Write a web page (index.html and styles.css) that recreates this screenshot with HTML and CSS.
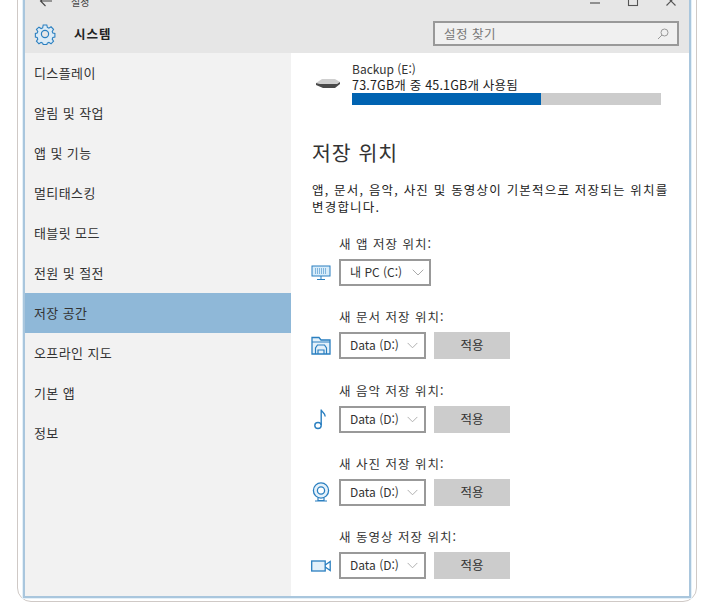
FILE: index.html
```html
<!DOCTYPE html>
<html lang="ko">
<head>
<meta charset="utf-8">
<title>설정</title>
<link rel="stylesheet" href="styles.css">
</head>
<body>
<div class="card">
  <div class="window">
    <header class="titlebar">
      <div class="caption">
        <svg class="back" width="14" height="12" viewBox="0 0 14 12"><path d="M13 6H1.5M6.5 1 1.5 6l5 5" fill="none" stroke="#444" stroke-width="1.1"/></svg>
        <span class="caption-title">설정</span>
        <div class="winbtns">
          <svg width="12" height="12" viewBox="0 0 12 12"><path d="M1 8h10" stroke="#555" stroke-width="1.2"/></svg>
          <svg width="12" height="12" viewBox="0 0 12 12"><rect x="1.5" y="1.5" width="9" height="9" fill="none" stroke="#555" stroke-width="1.1"/></svg>
          <svg width="12" height="12" viewBox="0 0 12 12"><path d="m1.5 1.5 9 9m0-9-9 9" stroke="#555" stroke-width="1.1"/></svg>
        </div>
      </div>
      <div class="headrow">
        <svg class="gear" width="22" height="22" viewBox="0 0 22 22"><path d="M9 1.5h4l.6 2.8 1.7.7 2.4-1.5 2.8 2.8-1.5 2.4.7 1.7 2.3.6v3.9l-2.3.6-.7 1.7 1.5 2.4-2.8 2.8-2.4-1.5-1.7.7-.6 1.8H9l-.6-1.8-1.7-.7-2.4 1.5-2.8-2.8 1.5-2.4-.7-1.7-2-.6v-3.9l2-.6.7-1.7-1.5-2.4L4.3 4l2.4 1.5 1.7-.7z" transform="translate(1.1 .6) scale(.9)" fill="#dcebf6" stroke="#2a7fc0" stroke-width="1.2"/><circle cx="11" cy="11" r="3.6" fill="#e6e6e6" stroke="#2a7fc0" stroke-width="1.2"/></svg>
        <h1 class="page-title">시스템</h1>
        <div class="search">
          <span>설정 찾기</span>
          <svg width="12" height="12" viewBox="0 0 12 12"><circle cx="7.5" cy="4.5" r="3.5" fill="none" stroke="#999"/><path d="M5 7 1 11" stroke="#999"/></svg>
        </div>
      </div>
    </header>
    <div class="body">
      <nav class="sidebar">
        <a class="nav-item">디스플레이</a>
        <a class="nav-item">알림 및 작업</a>
        <a class="nav-item">앱 및 기능</a>
        <a class="nav-item">멀티태스킹</a>
        <a class="nav-item">태블릿 모드</a>
        <a class="nav-item">전원 및 절전</a>
        <a class="nav-item selected">저장 공간</a>
        <a class="nav-item">오프라인 지도</a>
        <a class="nav-item">기본 앱</a>
        <a class="nav-item">정보</a>
      </nav>
      <main class="content">
        <section class="drive">
          <svg class="drive-icon" width="24" height="12" viewBox="0 0 24 12"><path d="M0 5 6 1h13l5 3-3 2H4z" fill="#cfcfcf"/><path d="M0 5l4 1h17l3-2v2l-5 4H7L0 7z" fill="#4a4a4a"/></svg>
          <div class="drive-info">
            <div class="drive-name">Backup (E:)</div>
            <div class="drive-usage">73.7GB개 중 45.1GB개 사용됨</div>
            <div class="bar"><div class="bar-fill" style="width:61.3%"></div></div>
          </div>
        </section>
        <h2 class="section-title">저장 위치</h2>
        <p class="desc">앱, 문서, 음악, 사진 및 동영상이 기본적으로 저장되는 위치를<br>변경합니다.</p>
        <div class="loc first">
          <div class="loc-label">새 앱 저장 위치:</div>
          <div class="loc-row">
            <svg class="loc-icon" width="20" height="16" viewBox="0 0 20 16"><rect x="1" y="1" width="18" height="10" fill="#d7ecfa" stroke="#2a7fc0"/><path d="M4 4h12M4 6h12M4 8h12" stroke="#2a7fc0" stroke-dasharray="1 1"/><path d="M10 11v3M6 14.5h8" stroke="#2a7fc0"/></svg>
            <div class="select wide"><span>내 PC (C:)</span><svg class="chev" width="12" height="7" viewBox="0 0 12 7"><path d="m.7.7 5.3 5.3L11.3.7" fill="none" stroke="#aaa"/></svg></div>
          </div>
        </div>
        <div class="loc">
          <div class="loc-label">새 문서 저장 위치:</div>
          <div class="loc-row">
            <svg class="loc-icon" width="20" height="19" viewBox="0 0 20 19"><path d="M1 18V1.5h7l2 2.5h9v14z" fill="#e4f1fa" stroke="#2a7fc0" stroke-width="1.3"/><path d="M1 6h18" stroke="#2a7fc0"/><path d="M4.5 18v-6l2-3h7l2 3v6M7 18v-4h6v4" fill="none" stroke="#2a7fc0" stroke-width="1.2"/></svg>
            <div class="select"><span>Data (D:)</span><svg class="chev" width="11" height="7" viewBox="0 0 12 7"><path d="m.7.7 5.3 5.3L11.3.7" fill="none" stroke="#aaa"/></svg></div>
            <button class="apply">적용</button>
          </div>
        </div>
        <div class="loc">
          <div class="loc-label">새 음악 저장 위치:</div>
          <div class="loc-row">
            <svg class="loc-icon" width="20" height="22" viewBox="0 0 20 22"><ellipse cx="7" cy="17.5" rx="3.2" ry="3" fill="none" stroke="#2a7fc0" stroke-width="1.4"/><path d="M10.2 17V1.5c.4 3 4 3.5 4 7" fill="none" stroke="#2a7fc0" stroke-width="1.4"/></svg>
            <div class="select"><span>Data (D:)</span><svg class="chev" width="11" height="7" viewBox="0 0 12 7"><path d="m.7.7 5.3 5.3L11.3.7" fill="none" stroke="#aaa"/></svg></div>
            <button class="apply">적용</button>
          </div>
        </div>
        <div class="loc">
          <div class="loc-label">새 사진 저장 위치:</div>
          <div class="loc-row">
            <svg class="loc-icon" width="20" height="20" viewBox="0 0 20 20"><circle cx="10" cy="8.5" r="7.6" fill="#e4f1fa" stroke="#2a7fc0" stroke-width="1.3"/><circle cx="10" cy="8.5" r="3.6" fill="#fff" stroke="#2a7fc0" stroke-width="1.3"/><path d="M7 16v2.5h6V16M4 19h12" fill="none" stroke="#2a7fc0" stroke-width="1.2"/></svg>
            <div class="select"><span>Data (D:)</span><svg class="chev" width="11" height="7" viewBox="0 0 12 7"><path d="m.7.7 5.3 5.3L11.3.7" fill="none" stroke="#aaa"/></svg></div>
            <button class="apply">적용</button>
          </div>
        </div>
        <div class="loc">
          <div class="loc-label">새 동영상 저장 위치:</div>
          <div class="loc-row">
            <svg class="loc-icon" width="20" height="12" viewBox="0 0 20 12"><rect x=".7" y="1" width="13.5" height="10" fill="#e4f1fa" stroke="#2a7fc0" stroke-width="1.3"/><path d="m14.2 5 5-3.5v9l-5-3.5" fill="none" stroke="#2a7fc0" stroke-width="1.3"/></svg>
            <div class="select"><span>Data (D:)</span><svg class="chev" width="11" height="7" viewBox="0 0 12 7"><path d="m.7.7 5.3 5.3L11.3.7" fill="none" stroke="#aaa"/></svg></div>
            <button class="apply">적용</button>
          </div>
        </div>
      </main>
    </div>
  </div>
</div>
</body>
</html>
```

FILE: styles.css
```css
* { box-sizing: border-box; }
html, body { margin: 0; padding: 0; background: #fff; overflow: hidden; height: 100%; }
body {
  font-family: "Noto Sans CJK KR", "Noto Sans", sans-serif;
  color: #2b2b2b;
  font-size: 12.5px;
}
.card {
  width: 680px;
  height: 615px;
  margin: -13px 0 0 17px;
  padding: 0 5px 3px;
  border: 1px solid #cfc9c6;
  border-radius: 0 0 14px 14px;
}
.window {
  height: 100%;
  display: flex;
  flex-direction: column;
  border: solid #a9c6dd;
  border-width: 0 2px 2px;
  background: #fff;
  box-shadow: 0 0 0 1px #e4f0f8;
}
.titlebar { background: #e6e6e6; height: 65px; flex: none; }
.caption { height: 26px; display: flex; align-items: center; padding-left: 14px; }
.back { flex: none; }
.caption-title { font-size: 10px; margin-left: 18px; color: #444; }
.winbtns { margin-left: auto; display: flex; gap: 26px; padding-right: 12px; }
.headrow { display: flex; align-items: center; height: 39px; padding-left: 9px; padding-right: 10px; }
.gear { flex: none; }
.page-title { margin: 0 0 0 18px; font-size: 12.5px; font-weight: 700; color: #222; letter-spacing: 1px; }
.search {
  margin-left: auto;
  width: 246px;
  height: 25px;
  border: 2px solid #999;
  background: #f0f0f0;
  display: flex;
  align-items: center;
  justify-content: space-between;
  padding: 0 8px 0 9px;
  color: #777;
  font-size: 12.5px;
  letter-spacing: .5px;
}
.body { flex: 1; display: flex; min-height: 0; }
.sidebar { width: 266px; flex: none; background: #f2f2f2; display: flex; flex-direction: column; }
.nav-item { height: 40px; display: flex; align-items: center; padding: 0 0 2px 9px; font-size: 13px; color: #333; letter-spacing: .4px; }
.nav-item.selected { background: #8fb8d8; }
.content { flex: 1; padding: 8px 0 0 20px; overflow: hidden; }
.drive { display: flex; }
.drive-icon { margin: 17px 0 0 5px; flex: none; }
.drive-info { margin-left: 12px; width: 309px; }
.drive-name { line-height: 16px; font-size: 12px; color: #333; }
.drive-usage { line-height: 15px; color: #222; letter-spacing: .2px; }
.bar { height: 12px; background: #ccc; margin-top: 1px; }
.bar-fill { height: 100%; background: #0063b1; }
.section-title { margin: 33px 0 0 1px; font-size: 20.5px; font-weight: 400; line-height: 28px; color: #333; letter-spacing: 1px; }
.desc { margin: 15px 0 0 1px; line-height: 17px; font-size: 12.5px; color: #222; letter-spacing: 1.2px; white-space: nowrap; }
.loc { margin-top: 22.3px; }
.loc.first { margin-top: 20px; }
.loc-label { padding-left: 28px; line-height: 17px; height: 17px; color: #333; letter-spacing: 1px; }
.loc-row { display: flex; align-items: center; height: 27px; margin-top: 7px; }
.loc-icon { flex: none; width: 20px; margin-right: 8px; }
.select {
  width: 87px;
  height: 27px;
  border: 2px solid #999;
  background: #fff;
  display: flex;
  align-items: center;
  justify-content: space-between;
  padding: 0 6px 2px 9px;
  font-size: 12px;
  color: #333;
  white-space: nowrap;
}
.select.wide { width: 92px; padding-right: 5px; }
.chev { flex: none; margin-top: 2px; }
.apply {
  margin-left: 8px;
  width: 76px;
  height: 27px;
  border: 0;
  background: #ccc;
  color: #333;
  font: inherit;
  padding: 0 0 2px;
}
```
